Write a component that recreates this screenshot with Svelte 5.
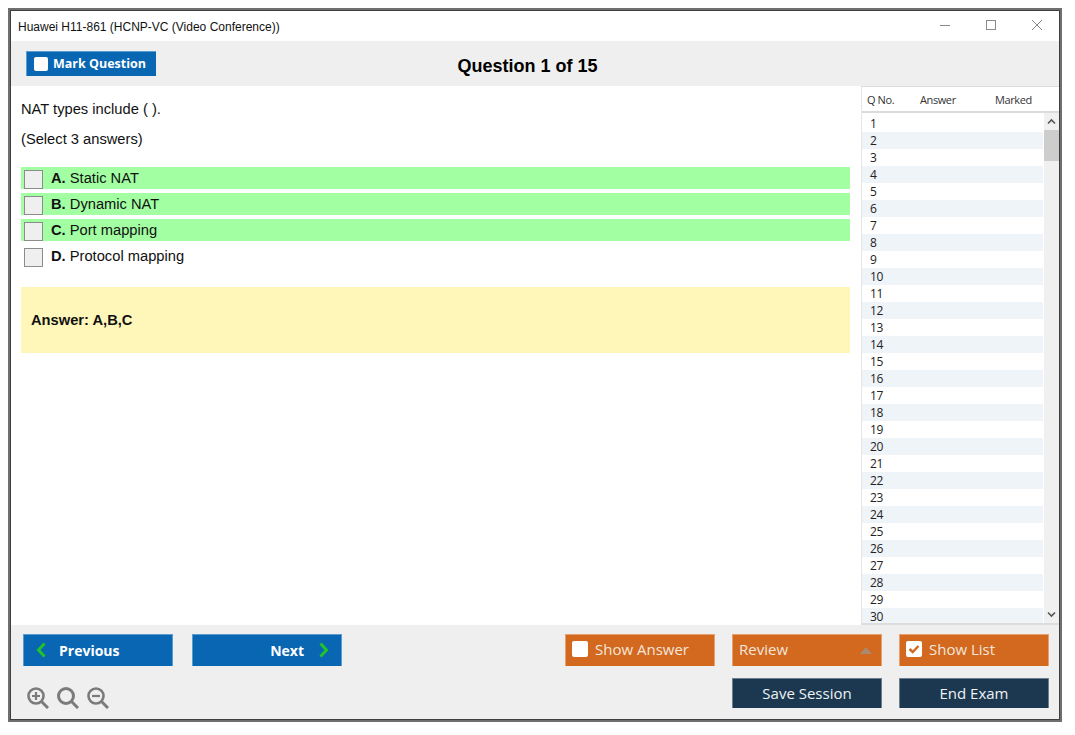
<script>
  const options = [
    { key: "A.", text: "Static NAT", correct: true },
    { key: "B.", text: "Dynamic NAT", correct: true },
    { key: "C.", text: "Port mapping", correct: true },
    { key: "D.", text: "Protocol mapping", correct: false },
  ];
  const rows = Array.from({ length: 30 }, (_, i) => i + 1);
</script>

<div class="window">
  <header class="titlebar">
    <span class="title">Huawei H11-861 (HCNP-VC (Video Conference))</span>
    <div class="controls">
      <svg width="12" height="12" viewBox="0 0 12 12"><path d="M1 6.5h10" stroke="#8a8a8a" fill="none" /></svg>
      <svg width="12" height="12" viewBox="0 0 12 12"><rect x="1.5" y="1.5" width="9" height="9" stroke="#8a8a8a" fill="none" /></svg>
      <svg width="12" height="12" viewBox="0 0 12 12"><path d="M1 1l10 10M11 1L1 11" stroke="#8a8a8a" fill="none" /></svg>
    </div>
  </header>

  <div class="toolbar">
    <button class="mark"><span class="box"></span>Mark Question</button>
    <h1>Question 1 of 15</h1>
  </div>

  <div class="middle">
    <main>
      <p class="question">NAT types include ( ).</p>
      <p class="hint">(Select 3 answers)</p>
      <div class="options">
        {#each options as o}
          <div class="option" class:correct={o.correct}>
            <span class="check"></span>
            <span><b>{o.key}</b> {o.text}</span>
          </div>
        {/each}
      </div>
      <div class="answer">Answer: A,B,C</div>
    </main>

    <aside>
      <div class="list-head">
        <span class="c1">Q No.</span><span class="c2">Answer</span><span class="c3">Marked</span>
      </div>
      <div class="list-body">
        <div class="rows">
          {#each rows as n}
            <div class="row" class:alt={n % 2 === 0}>{n}</div>
          {/each}
        </div>
        <div class="scrollbar">
          <svg class="arrow" width="15" height="17" viewBox="0 0 15 17"><path d="M4 10.5l3.5-3.5 3.5 3.5" stroke="#555" stroke-width="1.6" fill="none" /></svg>
          <div class="thumb"></div>
          <svg class="arrow down" width="15" height="17" viewBox="0 0 15 17"><path d="M4 6.5l3.5 3.5 3.5-3.5" stroke="#555" stroke-width="1.6" fill="none" /></svg>
        </div>
      </div>
    </aside>
  </div>

  <footer>
    <div class="line">
      <div class="group">
        <button class="btn blue prev">
          <svg width="12" height="16" viewBox="0 0 12 16"><path d="M9.5 1.5L3.5 8l6 6.5" stroke="#22c32a" stroke-width="3" fill="none" /></svg>
          Previous
        </button>
        <button class="btn blue next">
          Next
          <svg width="12" height="16" viewBox="0 0 12 16"><path d="M2.5 1.5l6 6.5-6 6.5" stroke="#22c32a" stroke-width="3" fill="none" /></svg>
        </button>
      </div>
      <div class="group right">
        <button class="btn orange"><span class="box big"></span>Show Answer</button>
        <button class="btn orange review">Review
          <svg width="12" height="7" viewBox="0 0 12 7"><path d="M6 0l6 7H0z" fill="#a98a72" /></svg>
        </button>
        <button class="btn orange">
          <span class="box big">
            <svg width="16" height="16" viewBox="0 0 16 16"><path d="M3.5 8l3.2 3L12.5 5" stroke="#d2691f" stroke-width="2.4" fill="none" /></svg>
          </span>Show List
        </button>
      </div>
    </div>
    <div class="line second">
      <div class="zoom">
        <svg width="22" height="22" viewBox="0 0 22 22"><g fill="none" stroke="#7b7b7b"><circle cx="9" cy="9" r="7.5" stroke-width="2.6" /><path d="M14.5 14.5L21 21" stroke-width="3" /><path d="M5 9h8M9 5v8" stroke-width="2.2" /></g></svg>
        <svg width="22" height="22" viewBox="0 0 22 22"><g fill="none" stroke="#7b7b7b"><circle cx="9" cy="9" r="7.5" stroke-width="3" /><path d="M14.5 14.5L21 21" stroke-width="3" /></g></svg>
        <svg width="22" height="22" viewBox="0 0 22 22"><g fill="none" stroke="#7b7b7b"><circle cx="9" cy="9" r="7.5" stroke-width="2.6" /><path d="M14.5 14.5L21 21" stroke-width="3" /><path d="M5 9h8" stroke-width="2.2" /></g></svg>
      </div>
      <div class="group right">
        <button class="btn navy">Save Session</button>
        <button class="btn navy">End Exam</button>
      </div>
    </div>
  </footer>
</div>

<style>
  :global(body) {
    margin: 0;
    background: #fff;
  }

  .window {
    box-sizing: border-box;
    width: 1054px;
    height: 714px;
    margin: 8px 0 0 8px;
    display: flex;
    flex-direction: column;
    border: 1px solid #6f6f6f;
    box-shadow: inset 0 0 0 1px #6f6f6f, inset 0 0 0 2px #3f3f3f;
    padding: 2px;
    background: #fff;
    font-family: "Liberation Sans", Arial, sans-serif;
    color: #111;
  }

  .titlebar {
    height: 30px;
    flex: none;
    display: flex;
    align-items: center;
    justify-content: space-between;
    padding: 0 0 0 7px;
  }

  .title {
    font-size: 12px;
    margin-top: 2px;
  }

  .controls {
    display: flex;
    gap: 34px;
    padding-right: 16px;
    margin-bottom: 2px;
  }

  .controls svg {
    display: block;
  }

  .toolbar {
    height: 45px;
    flex: none;
    background: #efefef;
    display: flex;
    align-items: center;
    padding-left: 15px;
  }

  h1 {
    flex: 1;
    margin: 0;
    padding: 6px 160px 0 0;
    text-align: center;
    font-size: 18px;
    font-weight: 700;
    color: #000;
  }

  button {
    border: 0;
    padding: 0;
    color: #fff;
    font-family: "Open Sans", sans-serif;
  }

  .mark {
    width: 130px;
    height: 25px;
    margin-top: -1px;
    display: flex;
    align-items: center;
    gap: 5px;
    padding: 0 0 0 7px;
    background: #0866b3;
    font-size: 12.5px;
    font-weight: 700;
    box-sizing: border-box;
    border: 1px solid #5a9bd0;
    border-width: 1px 0 0 1px;
  }

  .box {
    width: 14px;
    height: 14px;
    background: #fff;
    border-radius: 2px;
    flex: none;
  }

  .box.big {
    width: 16px;
    height: 16px;
    display: flex;
    margin-right: 7px;
  }

  .middle {
    flex: 1;
    min-height: 0;
    display: flex;
  }

  main {
    width: 850px;
    flex: none;
    box-sizing: border-box;
    padding: 15px 0 0 10px;
    font-size: 14.7px;
  }

  p {
    margin: 0;
    line-height: 17px;
  }

  .hint {
    margin-top: 13px;
  }

  .options {
    margin-top: 19px;
    display: flex;
    flex-direction: column;
    gap: 4px;
  }

  .option {
    height: 22px;
    width: 829px;
    display: flex;
    align-items: center;
    gap: 8px;
    padding-left: 3px;
    box-sizing: border-box;
  }

  .correct {
    background: #a2ffa2;
  }

  .check {
    box-sizing: border-box;
    width: 19px;
    height: 19px;
    margin-top: 3px;
    border: 1px solid #8c8c8c;
    background: #efefef;
  }

  .answer {
    width: 829px;
    height: 66px;
    margin-top: 20px;
    box-sizing: border-box;
    padding-left: 10px;
    display: flex;
    align-items: center;
    background: #fef7b9;
    font-weight: 700;
  }

  aside {
    flex: 1;
    min-width: 0;
    display: flex;
    flex-direction: column;
    border-top: 1px solid #dcdcdc;
    border-left: 1px solid #e6e6e6;
    border-bottom: 2px solid #dcdcdc;
    font-family: "Open Sans", sans-serif;
    font-size: 11px;
    overflow: hidden;
  }

  .list-head {
    height: 24px;
    flex: none;
    display: flex;
    align-items: center;
    border-bottom: 2px solid #dcdcdc;
    color: #333;
    letter-spacing: -0.4px;
    font-size: 11px;
  }

  .c1 { width: 58px; padding-left: 5px; box-sizing: border-box; }
  .c2 { width: 75px; }

  .list-body {
    flex: 1;
    min-height: 0;
    display: flex;
  }

  .rows {
    flex: 1;
    padding-top: 2px;
    overflow: hidden;
    margin-right: 1px;
  }

  .row {
    height: 17px;
    line-height: 17px;
    padding-left: 8px;
    color: #222;
    font-size: 12px;
    letter-spacing: -0.4px;
  }

  .alt {
    background: #eff4f9;
  }

  .scrollbar {
    width: 15px;
    flex: none;
    background: #f0f0f0;
    display: flex;
    flex-direction: column;
  }

  .arrow {
    display: block;
    flex: none;
  }

  .arrow.down {
    margin-top: auto;
  }

  .thumb {
    height: 31px;
    background: #cdcdcd;
  }

  footer {
    height: 94px;
    flex: none;
    background: #efefef;
    box-sizing: border-box;
    padding: 9px 10px 0 12px;
  }

  .line {
    display: flex;
    justify-content: space-between;
    align-items: flex-start;
  }

  .second {
    margin-top: 12px;
  }

  .group {
    display: flex;
    gap: 19px;
  }

  .group.right {
    gap: 17px;
  }

  .btn {
    width: 150px;
    height: 32px;
    display: flex;
    align-items: center;
    box-sizing: border-box;
    font-size: 15px;
    padding: 0 0 4px 6px;
    border: 1px solid #e8a06e;
    border-bottom: 0;
  }

  .blue {
    padding: 0 0 1px;
    background: #0866b3;
    border-color: #5a9bd0;
    font-size: 14px;
    font-weight: 700;
  }

  .prev {
    padding-left: 11px;
    gap: 12px;
  }

  .next {
    justify-content: flex-end;
    gap: 14px;
    padding-right: 11px;
  }

  .orange {
    background: #d2691f;
    color: #f4e6dc;
  }

  .review {
    justify-content: space-between;
    padding-right: 9px;
  }

  .review svg {
    margin-top: 3px;
  }

  .navy {
    height: 30px;
    justify-content: center;
    padding: 0 0 2px;
    background: #1b3850;
    border-color: #6d7f8e;
    color: #eef2f5;
  }

  .zoom {
    display: flex;
    gap: 8px;
    padding: 9px 0 0 4px;
  }
</style>
